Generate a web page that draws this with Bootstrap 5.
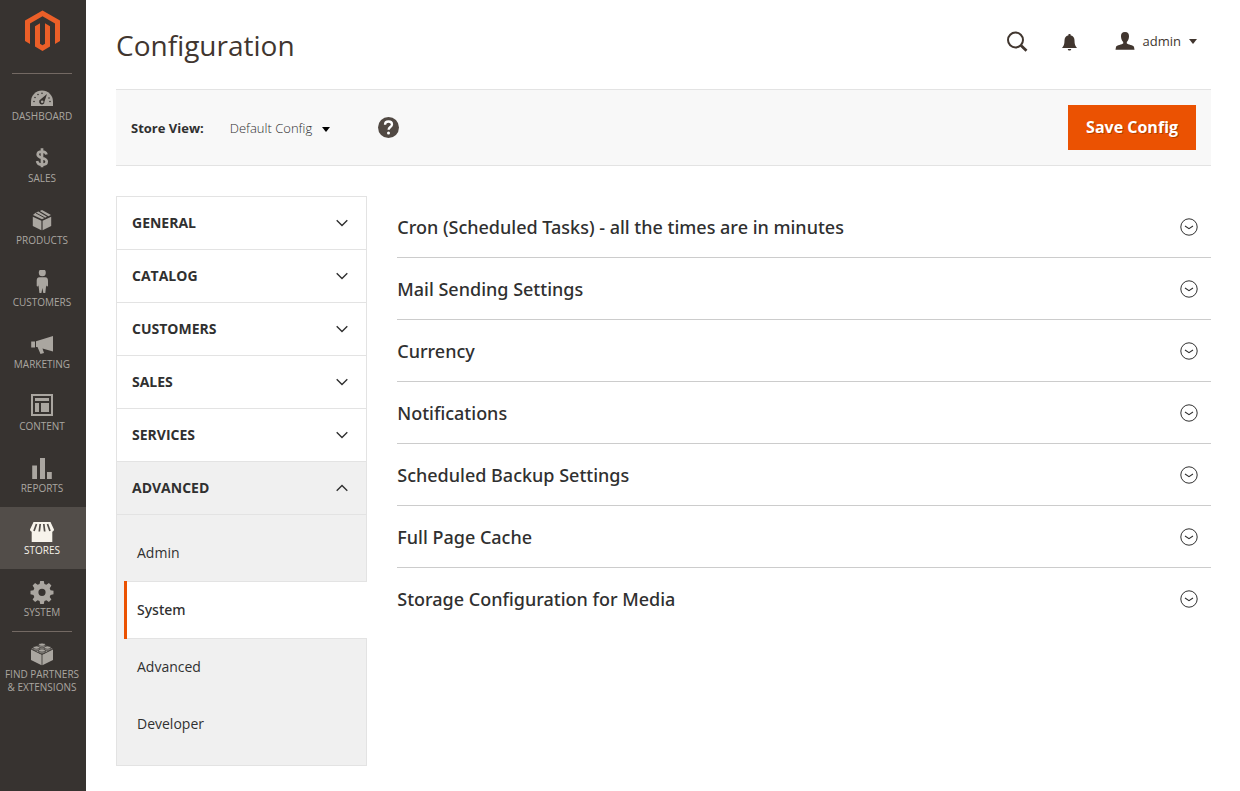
<!DOCTYPE html>
<html lang="en">
<head>
<meta charset="utf-8">
<meta name="viewport" content="width=device-width, initial-scale=1">
<title>Configuration / Magento Admin</title>
<link href="https://cdn.jsdelivr.net/npm/bootstrap@5.3.0/dist/css/bootstrap.min.css" rel="stylesheet">
<style>
  body { font: 400 14px/20px "Open Sans", "Noto Sans", sans-serif; color: #303030; background: #fff; }
  a { color: inherit; text-decoration: none; }
  .side-menu { width: 86px; background: #373330; }
  .brand-link { height: 73px; padding-top: 10px; }
  .menu-rule { margin: 0 14px 0 12px; border-top: 1px solid #736963; }
  .menu-link { height: 62px; padding: 11px 2px 0 0; color: #aaa6a0; font-size: 10px; line-height: 13px; text-transform: uppercase; text-align: center; white-space: nowrap; }
  .menu-link svg { width: 24px; height: 24px; margin-bottom: 2px; flex: none; fill: currentColor; }
  .menu-link.active { background: #524d49; color: #f7f3eb; }
  .menu-list { margin-top: -1px; }
  .menu-list .menu-rule { margin-bottom: -1px; }
  .page-area { padding: 0 29px 24px 30px; }
  .page-head { height: 89px; }
  .page-head h1 { font-size: 28px; line-height: 36px; font-weight: 400; color: #41362f; margin-top: 27px; }
  .head-tools { color: #41362f; padding: 28px 14px 0 0; gap: 34px; }
  .user-btn { font-size: 13px; line-height: 20px; color: #41362f; gap: 8px; }
  .plain-btn { border: 0; padding: 0; background: none; color: inherit; }
  .page-bar { background: #f8f8f8; border-top: 1px solid #e3e3e3; border-bottom: 1px solid #e3e3e3; padding: 15px; margin-bottom: 30px; }
  .store-label { font-size: 13px; font-weight: 700; margin-right: 26px; }
  .store-select { appearance: none; border: 0; width: 100px; padding: 0; font-size: 13px; font-weight: 300; line-height: 20px; color: #303030; background: url("data:image/svg+xml,%3Csvg xmlns='http://www.w3.org/2000/svg' width='8' height='5'%3E%3Cpath d='M0 0h8L4 5z'/%3E%3C/svg%3E") no-repeat right 0 top 9px; }
  .save-btn { background: #eb5202; color: #fff; border: 0; border-radius: 0; height: 45px; padding: 0 18px 2px; font-size: 16px; font-weight: 700; text-shadow: 1px 1px 0 rgba(0,0,0,.25); }
  .save-btn:hover { background: #ba4000; color: #fff; }
  .two-col { --bs-gutter-x: 30px; }
  .config-nav { border: 1px solid #e3e3e3; }
  .nav-head { height: 53px; padding: 0 18px 0 15px; border-bottom: 1px solid #e3e3e3; font-weight: 700; text-transform: uppercase; }
  .nav-head[aria-expanded="true"], .nav-pages { background: #f0f0f0; }
  .nav-pages { padding: 9px 0 13px 7px; }
  .nav-page { height: 57px; padding-left: 13px; }
  .nav-page.active { height: 58px; margin: 0 -1px -1px 0; background: #fff; border: solid #e3e3e3; border-width: 1px 0; font-weight: 500; font-family: "Noto Sans", sans-serif; position: relative; }
  .nav-page.active::before { content: ""; position: absolute; left: 0; top: -1px; bottom: -1px; width: 3px; background: #eb5202; }
  .section-head { height: 62px; padding-right: 13px; border-bottom: 1px solid #ccc; font-size: 18px; font-weight: 500; font-family: "Noto Sans", sans-serif; }
  .section-list li:last-child .section-head { border-bottom-color: transparent; }
</style>
</head>
<body>
<svg class="d-none" aria-hidden="true">
  <symbol id="chev" viewBox="0 0 12 8"><path d="M.7 1.2 6 6.4l5.3-5.2" fill="none" stroke="#303030" stroke-width="1.4"/></symbol>
  <symbol id="circ" viewBox="0 0 18 18"><circle cx="9" cy="9" r="8.2" fill="none" stroke="#303030"/><path d="M5 8l4 2.700L13 8" fill="none" stroke="#303030" stroke-width="1.1"/></symbol>
</svg>
<div class="d-flex min-vh-100">
  <nav class="side-menu flex-shrink-0" aria-label="Main menu">
    <a href="#" class="brand-link d-block text-center" aria-label="Magento Admin">
      <svg width="36" height="41" viewBox="0 0 36 41" fill="#eb5f28"><path d="M17.500 0.500 35 10.600V31L30 33.900V13.500L17.500 6.300 5 13.500V33.900L0 31V10.600zM15 13.300V33.700L17.500 35.200 20 33.700V13.300L25 16.200V36.600L17.500 41 10 36.600V16.200z"/></svg>
    </a>
    <div class="menu-rule"></div>
    <div class="menu-list">
      <a href="#" class="menu-link d-flex flex-column align-items-center"><svg viewBox="0 0 24 24"><path d="M1 22v-4.500a11 11 0 0 1 22 0V22z"/><g fill="#373330"><circle cx="4" cy="17.500" r=".8"/><circle cx="5" cy="13.500" r=".8"/><circle cx="8" cy="10.500" r=".8"/><circle cx="12" cy="9.200" r=".8"/><circle cx="19" cy="14" r=".8"/><circle cx="20" cy="17.500" r=".8"/><path d="M17 10l-2.500 7.500a2.700 2.700 0 1 1-3.800-2.200zM12.200 16.400a1.300 1.300 0 1 0 0 2.600 1.300 1.300 0 0 0 0-2.600z"/></g></svg>Dashboard</a>
      <a href="#" class="menu-link d-flex flex-column align-items-center"><svg viewBox="0 0 24 24"><path d="M16.500 8.500C16 6.500 14.500 5.500 12 5.500s-4.300 1-4.300 3c0 4.500 9 2.400 9 7 0 2-1.900 3.300-4.700 3.300s-4.500-1.400-4.900-3.800M12 2.300v19" fill="none" stroke="currentColor" stroke-width="2.700"/></svg>Sales</a>
      <a href="#" class="menu-link d-flex flex-column align-items-center"><svg viewBox="0 0 24 24"><path d="M2.800 8.800l8.600 4v9.500l-8.600-4.400zM21.200 8.800l-8.600 4v9.500l8.600-4.400zM9.800 2.900l2.200-1 9 5.200-2.600 1.200zM5.200 5.100l3.100-1.500 8.700 5.200-5 2.500-9-4.200z"/><path d="M5.800 4.900l9 4.900" stroke="#373330" stroke-width="1"/></svg>Products</a>
      <a href="#" class="menu-link d-flex flex-column align-items-center"><svg viewBox="0 0 24 24"><circle cx="12.300" cy="2.700" r="3.500"/><path d="M9.500 7.200h5.600c2.200 0 2.900 1.600 2.900 3.500v5c0 1-1.700 1-1.700 0v-1.500l-1 8.800h-2l-.9-5-1 5h-2l-1-8.800v1.500c0 1-1.700 1-1.700 0v-5c0-1.900.6-3.500 2.800-3.500z"/></svg>Customers</a>
      <a href="#" class="menu-link d-flex flex-column align-items-center"><svg viewBox="0 0 24 24"><path d="M1.200 9.500H5v6H1.200zM6 9.200 23 4v15.500l-10.500-3 1.500 4.500-3.500 1-3-7H6z"/></svg>Marketing</a>
      <a href="#" class="menu-link d-flex flex-column align-items-center"><svg viewBox="0 0 24 24"><path fill-rule="evenodd" d="M1 0h22v22H1zM3 2v18h18V2zM5 4h14v3H5zM5 9h4v9H5zM11 9H19v9h-8z"/></svg>Content</a>
      <a href="#" class="menu-link d-flex flex-column align-items-center"><svg viewBox="0 0 24 24"><path d="M2.200 9.500H7V23H2.200zM10 2h5v21h-5zM17 16h4.800V23H17z"/></svg>Reports</a>
      <a href="#" class="menu-link active d-flex flex-column align-items-center" aria-current="page"><svg viewBox="0 0 24 24"><path d="M3.500 4h17l3.500 7.500c0 1-.5 1.800-1.700 2.200V24H1.700V13.700C.5 13.300 0 12.500 0 11.500z"/><path d="M6.500 6 4 13M10.200 6l-.9 7.500M13.800 6l.9 7.500M17.500 6l2.500 7" stroke="#524d49" stroke-width="1.700"/></svg>Stores</a>
      <a href="#" class="menu-link d-flex flex-column align-items-center"><svg viewBox="0 0 24 24"><path fill-rule="evenodd" d="M10.200 1h3.600l.6 3 2 .8 2.500-1.700 2.500 2.500-1.700 2.600.8 2 3 .5v3.600l-3 .6-.8 2 1.700 2.500-2.500 2.500-2.500-1.700-2 .8-.6 3h-3.600l-.6-3-2-.8-2.500 1.700-2.500-2.500 1.700-2.500-.8-2-3-.6v-3.600l3-.5.8-2-1.700-2.600 2.500-2.500 2.500 1.700 2-.8zM12 8.700a3.600 3.600 0 1 0 0 7.200 3.600 3.600 0 0 0 0-7.200z"/></svg>System</a>
      <div class="menu-rule"></div>
      <a href="#" class="menu-link d-flex flex-column align-items-center"><svg viewBox="0 0 24 24"><path d="M1 7.500l10.600 5.300v10.500L1 18zM23 7.500l-10.600 5.300v10.500L23 18z"/><path d="M1.500 6.800 12 1.700l10.500 5.100L12 12z"/><g stroke="#373330" stroke-width=".7"><path d="M8.700 2.900v1.500c0 1.800 6.600 1.800 6.600 0V2.900z"/><ellipse cx="12" cy="2.700" rx="3.300" ry="1.600"/><path d="M3.200 5.800v1.300c0 1.800 6.600 1.800 6.600 0V5.800z"/><ellipse cx="6.500" cy="5.600" rx="3.300" ry="1.600"/><path d="M14.200 5.800v1.300c0 1.800 6.600 1.800 6.600 0V5.800z"/><ellipse cx="17.500" cy="5.600" rx="3.300" ry="1.600"/><path d="M8.700 8.700V10c0 1.800 6.600 1.800 6.600 0V8.700z"/><ellipse cx="12" cy="8.500" rx="3.300" ry="1.600"/></g></svg>Find Partners<br>&amp; Extensions</a>
    </div>
  </nav>

  <main class="page-area flex-grow-1">
    <header class="page-head d-flex justify-content-between align-items-start">
      <h1>Configuration</h1>
      <div class="head-tools d-flex align-items-center">
        <button class="plain-btn d-flex" aria-label="Search"><svg width="21" height="26" viewBox="3 0 21 26" fill="none" stroke="currentColor"><circle cx="11.500" cy="12" r="7.500" stroke-width="2"/><path d="M17 17.500l5.500 5.200" stroke-width="2.800"/></svg></button>
        <button class="plain-btn d-flex" aria-label="Notifications"><svg width="15" height="19" viewBox="0 -2 15 19" fill="currentColor"><path d="M6.500 0h2v1.200c3 .6 4 3 4 5.300 0 4 .8 5.500 2.500 7.500H0c1.700-2 2.500-3.500 2.500-7.500 0-2.300 1-4.700 4-5.300zM5.800 15h3.400c0 2-3.400 2-3.400 0z"/></svg></button>
        <button class="plain-btn user-btn d-flex align-items-center ps-1"><svg width="20" height="18" viewBox="0 0 20 18" fill="currentColor"><path d="M10 0c3 0 4.200 2 4 4.500-.1 2.500-1 4.600-2.200 5.500v1.500c1 1 6.700 1.500 7.200 3.500l.5 2.800H.5L1 15c.5-2 6.200-2.500 7.200-3.500V10C7 9.100 6.100 7 6 4.500 5.800 2 7 0 10 0z"/></svg><span>admin</span><svg width="8" height="5" viewBox="0 0 8 5" fill="currentColor"><path d="M0 0h8L4 5z"/></svg></button>
      </div>
    </header>

    <div class="page-bar d-flex align-items-center">
      <label for="store-view" class="store-label">Store View:</label>
      <select id="store-view" class="store-select"><option>Default Config</option></select>
      <a href="#" class="ms-5 d-flex" aria-label="What is this?"><svg width="21" height="21" viewBox="0 0 21 21"><circle cx="10.500" cy="10.500" r="10.500" fill="#514943"/><path d="M7 7.800C7 5.700 8.300 4.500 10.500 4.500c2 0 3.500 1.100 3.500 2.900 0 2.600-3.400 2.600-3.400 5.300" fill="none" stroke="#fff" stroke-width="2.300"/><circle cx="10.500" cy="16" r="1.500" fill="#fff"/></svg></a>
      <button class="btn save-btn ms-auto">Save Config</button>
    </div>

    <div class="row two-col">
      <div class="col-3">
        <nav class="config-nav" aria-label="Configuration sections">
          <button class="plain-btn nav-head d-flex w-100 align-items-center justify-content-between" aria-expanded="false">General<svg width="12" height="8"><use href="#chev"/></svg></button>
          <button class="plain-btn nav-head d-flex w-100 align-items-center justify-content-between" aria-expanded="false">Catalog<svg width="12" height="8"><use href="#chev"/></svg></button>
          <button class="plain-btn nav-head d-flex w-100 align-items-center justify-content-between" aria-expanded="false">Customers<svg width="12" height="8"><use href="#chev"/></svg></button>
          <button class="plain-btn nav-head d-flex w-100 align-items-center justify-content-between" aria-expanded="false">Sales<svg width="12" height="8"><use href="#chev"/></svg></button>
          <button class="plain-btn nav-head d-flex w-100 align-items-center justify-content-between" aria-expanded="false">Services<svg width="12" height="8"><use href="#chev"/></svg></button>
          <button class="plain-btn nav-head d-flex w-100 align-items-center justify-content-between" aria-expanded="true">Advanced<svg width="12" height="8" viewBox="0 0 12 8"><path d="M.7 6.800 6 1.600l5.300 5.200" fill="none" stroke="#303030" stroke-width="1.400"/></svg></button>
          <div class="nav-pages">
            <a href="#" class="nav-page d-flex align-items-center">Admin</a>
            <a href="#" class="nav-page active d-flex align-items-center" aria-current="page">System</a>
            <a href="#" class="nav-page d-flex align-items-center">Advanced</a>
            <a href="#" class="nav-page d-flex align-items-center">Developer</a>
          </div>
        </nav>
      </div>
      <div class="col-9">
        <ul class="section-list list-unstyled mb-0">
          <li><button class="plain-btn section-head d-flex w-100 align-items-center justify-content-between">Cron (Scheduled Tasks) - all the times are in minutes<svg width="18" height="18"><use href="#circ"/></svg></button></li>
          <li><button class="plain-btn section-head d-flex w-100 align-items-center justify-content-between">Mail Sending Settings<svg width="18" height="18"><use href="#circ"/></svg></button></li>
          <li><button class="plain-btn section-head d-flex w-100 align-items-center justify-content-between">Currency<svg width="18" height="18"><use href="#circ"/></svg></button></li>
          <li><button class="plain-btn section-head d-flex w-100 align-items-center justify-content-between">Notifications<svg width="18" height="18"><use href="#circ"/></svg></button></li>
          <li><button class="plain-btn section-head d-flex w-100 align-items-center justify-content-between">Scheduled Backup Settings<svg width="18" height="18"><use href="#circ"/></svg></button></li>
          <li><button class="plain-btn section-head d-flex w-100 align-items-center justify-content-between">Full Page Cache<svg width="18" height="18"><use href="#circ"/></svg></button></li>
          <li><button class="plain-btn section-head d-flex w-100 align-items-center justify-content-between">Storage Configuration for Media<svg width="18" height="18"><use href="#circ"/></svg></button></li>
        </ul>
      </div>
    </div>
  </main>
</div>
<script src="https://cdn.jsdelivr.net/npm/bootstrap@5.3.0/dist/js/bootstrap.bundle.min.js"></script>
</body>
</html>
